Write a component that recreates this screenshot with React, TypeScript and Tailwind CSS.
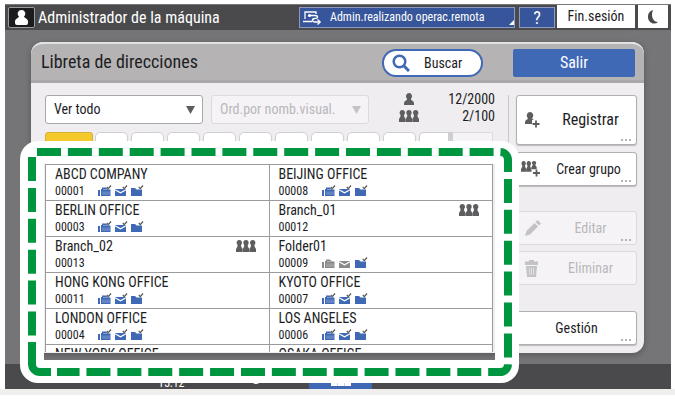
import { clsx } from "clsx";
import type { ReactNode } from "react";

type Entry = {
  name: string;
  id: string;
  group?: boolean;
  folderOnly?: boolean;
};

const ROWS: [Entry, Entry][] = [
  [
    { name: "ABCD COMPANY", id: "00001" },
    { name: "BEIJING OFFICE", id: "00008" },
  ],
  [
    { name: "BERLIN OFFICE", id: "00003" },
    { name: "Branch_01", id: "00012", group: true },
  ],
  [
    { name: "Branch_02", id: "00013", group: true },
    { name: "Folder01", id: "00009", folderOnly: true },
  ],
  [
    { name: "HONG KONG OFFICE", id: "00011" },
    { name: "KYOTO OFFICE", id: "00007" },
  ],
  [
    { name: "LONDON OFFICE", id: "00004" },
    { name: "LOS ANGELES", id: "00006" },
  ],
  [
    { name: "NEW YORK OFFICE", id: "00002" },
    { name: "OSAKA OFFICE", id: "00005" },
  ],
];

const TABS = ["AB", "CD", "EF", "GH", "IJK", "LMN", "OPQ", "RST", "UVW"];

const PAWN = "M3.300 0C5 0 6 1.200 6 2.700q0 1.500-1 2.300 0 1.500.7 2.500L6.600 9v3H0V9l.9-1.500q.7-1 .7-2.500Q.6 4.200.6 2.700C.6 1.200 1.600 0 3.300 0Z";

function PersonIcon({ className }: { className?: string }) {
  return (
    <svg viewBox="0 0 10 12" className={clsx("h-3 w-[10px]", className)} fill="currentColor" aria-hidden="true">
      <path d="M5 0a3.200 3.200 0 0 1 2.300 5.300q-.4.700-.3 1.500Q10 8 10 10v2H0v-2q0-2 3-3.200.1-.8-.3-1.500A3.200 3.200 0 0 1 5 0Z" />
    </svg>
  );
}

function GroupIcon({ className }: { className?: string }) {
  return (
    <svg viewBox="0 0 20 12" className={clsx("h-3 w-5", className)} fill="currentColor" aria-hidden="true">
      <path d={PAWN} />
      <path transform="translate(6.700 0)" d={PAWN} />
      <path transform="translate(13.400 0)" d={PAWN} />
    </svg>
  );
}

function Plus() {
  return <path d="M0 3.500h7M3.500 0v7" stroke="currentColor" strokeWidth="1.800" fill="none" />;
}

function AddPersonIcon() {
  return (
    <svg viewBox="0 0 15 16" className="h-4 w-[15px]" fill="currentColor" aria-hidden="true">
      <path d="M5 0a3.500 3.500 0 0 1 2.600 5.600q-.5.700-.3 1.400L9 8H7v4H0v-2q.2-2.200 2.700-3 .2-.7-.3-1.400A3.500 3.500 0 0 1 5 0Z" />
      <g transform="translate(7.500 8.500)">
        <Plus />
      </g>
    </svg>
  );
}

function AddGroupIcon() {
  return (
    <svg viewBox="0 0 20 16" className="h-4 w-5" fill="currentColor" aria-hidden="true">
      <path transform="scale(0.800 0.900)" d={PAWN} />
      <path transform="translate(5.200 0) scale(0.800 0.900)" d={PAWN} />
      <path transform="translate(10.400 0) scale(0.800 0.680)" d={PAWN} />
      <g transform="translate(12 8.500)">
        <Plus />
      </g>
    </svg>
  );
}

function Tick() {
  return <path d="M8.800 2l1.500 1.600L13 .500" stroke="#555" strokeWidth="1.200" fill="none" />;
}

function FaxIcon({ on }: { on: boolean }) {
  return (
    <svg viewBox="0 0 14 12" className="h-3 w-[14px]" aria-hidden="true">
      <path d="M0 5h2v6H0zM3 4h1V2.500h4L10 4.500h2.500V11H3z" fill={on ? "#4069b5" : "#8a8a8a"} />
      <path d="M5 4.500h4M5 6.500v3.500M7 6.500v3.500M9 6.500v3.500M11 6.500v3.500" stroke="#fff" strokeWidth=".7" opacity=".5" />
      {on && <Tick />}
    </svg>
  );
}

function MailIcon({ on }: { on: boolean }) {
  return (
    <svg viewBox="0 0 14 12" className="h-3 w-[14px]" aria-hidden="true">
      <path d="M1 4h11v7H1z" fill={on ? "#4069b5" : "#8a8a8a"} />
      <path d="M1 4.800l5.500 3L12 4.800" stroke="#fff" strokeWidth="1.200" fill="none" />
      {on && <Tick />}
    </svg>
  );
}

function FolderIcon() {
  return (
    <svg viewBox="0 0 14 12" className="h-3 w-[14px]" aria-hidden="true">
      <path d="M1 3h4l1.500 1.500H12V11H1z" fill="#4069b5" />
      <Tick />
    </svg>
  );
}

function EntryCell({ entry }: { entry: Entry }) {
  return (
    <td className="border border-[#9b9b9d] p-0">
      <div className="relative h-[35px] pl-[9px]">
        <div className="text-[14px] leading-[18px]">{entry.name}</div>
        <div className="flex items-center text-[12px] leading-[16px]">
          <span className="w-[43px]">{entry.id}</span>
          {!entry.group && (
            <span className="flex gap-[2px]">
              <FaxIcon on={!entry.folderOnly} />
              <MailIcon on={!entry.folderOnly} />
              <FolderIcon />
            </span>
          )}
        </div>
        {entry.group && <GroupIcon className="absolute top-[3px] right-[13px] text-[#5e5e60]" />}
      </div>
    </td>
  );
}

type SideButtonProps = {
  children: ReactNode;
  icon?: ReactNode;
  disabled?: boolean;
  dots?: boolean;
  className?: string;
};

function SideButton({ children, icon, disabled, dots = true, className }: SideButtonProps) {
  return (
    <button
      type="button"
      disabled={disabled}
      className={clsx(
        "relative flex w-full items-center rounded-[3px] border",
        disabled
          ? "border-[#dcdadd] bg-[#f5f3f6] text-[#b9b8ba]"
          : "border-[#b0afb1] bg-white text-[#1d1d1f] shadow-[0_1px_1px_#bbb]",
        className,
      )}
    >
      {icon && <span className="flex w-5 shrink-0 text-[#5e5e60] in-disabled:text-[#c3c2c4]">{icon}</span>}
      <span className="flex-1 text-center">{children}</span>
      {dots && (
        <span className="absolute right-[5px] bottom-[3px] flex gap-[2px]">
          <i className="size-[2px] bg-[#b4b3b5]" />
          <i className="size-[2px] bg-[#b4b3b5]" />
          <i className="size-[2px] bg-[#b4b3b5]" />
        </span>
      )}
    </button>
  );
}

function DropDown({ label, disabled }: { label: string; disabled?: boolean }) {
  return (
    <div className="relative h-[29px] w-[158px] self-end">
      <select
        aria-label={label}
        disabled={disabled}
        className={clsx(
          "h-full w-full appearance-none rounded-[3px] border px-2 text-[14px] opacity-100",
          disabled ? "border-[#dcdadd] bg-[#f5f3f6] text-[#b9b8ba]" : "border-[#a9a8aa] bg-white text-[#1d1d1f]",
        )}
      >
        <option>{label}</option>
      </select>
      <svg
        viewBox="0 0 9 8"
        className={clsx(
          "pointer-events-none absolute top-[11px] right-2 h-2 w-[9px]",
          disabled ? "text-[#c3c2c4]" : "text-[#5e5e60]",
        )}
        aria-hidden="true"
      >
        <path d="M0 0h9L4.500 8z" fill="currentColor" />
      </svg>
    </div>
  );
}

function TopBar() {
  return (
    <header className="flex h-[26px] items-start border-t border-[#77767a] bg-[#4a4a4c] pr-[3px] pl-[3px] text-white">
      <span className="mt-[2px] flex h-[21px] w-[27px] items-center justify-center rounded-[2px] border border-[#9a9a9c] bg-[#1c1c1e]">
        <svg viewBox="0 0 13 15" className="h-[15px] w-[13px]" fill="#fff" aria-hidden="true">
          <path d="M6.500 0a3.700 3.700 0 0 1 2.500 6.500c.2 1.800 4 2 4 5V13q0 2-2 2H2q-2 0-2-2v-1.500c0-3 3.800-3.200 4-5A3.700 3.700 0 0 1 6.500 0Z" />
        </svg>
      </span>
      <span className="ml-[3px] text-[16px] leading-[25px] whitespace-nowrap">Administrador de la máquina</span>
      <button
        type="button"
        className="relative mt-[2px] ml-auto flex h-[21px] w-[216px] items-center border border-[#8d9bc4] bg-[#37559a] pl-[2px] text-[12px] leading-[19px]"
      >
        <svg viewBox="0 0 20 16" className="h-4 w-5" fill="none" stroke="#fff" strokeWidth="1.300" aria-hidden="true">
          <path d="M3 9V2h11v2M1 11.500h9M8 5.500h5q2.500 0 2.500 1.500T13 8.500t-2.500 1.700T13 12h5M15.500 9.500L18.200 12l-2.700 2.500" />
          <circle cx="7.500" cy="5.500" r="1.600" fill="#fff" stroke="none" />
        </svg>
        <span className="ml-2 whitespace-nowrap">Admin.realizando operac.remota</span>
        <svg viewBox="0 0 5 5" className="absolute right-0 bottom-[2px] size-[5px]" aria-hidden="true">
          <path d="M5 0v5H0z" fill="#fff" />
        </svg>
      </button>
      <button
        type="button"
        className="mt-[2px] ml-1 h-[21px] w-[36px] border border-[#8d9bc4] bg-[#37559a] text-[18px] leading-[19px]"
      >
        ?
      </button>
      <button type="button" className="ml-[2px] h-[23px] w-[78px] bg-white text-[14px] leading-[23px] text-[#1d1d1f]">
        Fin.sesión
      </button>
      <button type="button" aria-label="Reposo" className="ml-[3px] flex h-[23px] w-[30px] items-center justify-center bg-white">
        <svg viewBox="0 0 10 14" className="h-[14px] w-[10px]" fill="#4a4a4c" aria-hidden="true">
          <path d="M5 0C1 1.500 0 4 0 7c0 4 3 6.500 6 6.500q2.500 0 4-1.500C5 12 2.500 6 5 0Z" />
        </svg>
      </button>
    </header>
  );
}

function HighlightFrame() {
  return (
    <div className="pointer-events-none absolute -top-[23px] -right-[26px] -bottom-[31px] -left-[25px] z-10 rounded-[18px] border-[24px] border-t-[23px] border-b-[23px] border-white">
      <svg
        viewBox="20 141 499 242"
        preserveAspectRatio="none"
        className="absolute -top-[23px] -left-6 h-[calc(100%+46px)] w-[calc(100%+48px)] max-w-none"
        fill="none"
        stroke="#009640"
        strokeWidth="8"
        aria-hidden="true"
      >
        <path d="M37 152H500a8 8 0 0 1 8 8V364a8 8 0 0 1-8 8H57" strokeDasharray="24 6.900" />
        <path d="M32 157V336" strokeDasharray="24 6.900" />
        <path d="M32 342V364a8 8 0 0 0 8 8H51" />
      </svg>
    </div>
  );
}

export default function App() {
  return (
    <div className="min-h-screen bg-white pt-1 pr-1 pl-[5px] font-['Roboto_Condensed','Open_Sans_Condensed',sans-serif] text-[#1d1d1f]">
      <div className="bg-[#757477]">
        <TopBar />
        <main className="pt-3 pr-[27px] pb-[11px] pl-[26px]">
          <div className="rounded-[12px] bg-[#efedf0] shadow-[0_2px_5px_1px_#5e5d60]">
            <div className="flex h-[41px] items-start rounded-t-[12px] border-t-2 border-b-[3px] border-t-[#e2e1e3] border-b-[#a9a8aa] bg-[#b5b3b4] pt-[5px] pr-[9px] pl-[10px]">
              <h1 className="text-[18px] leading-[26px]">Libreta de direcciones</h1>
              <button
                type="button"
                className="ml-auto flex h-[28px] w-[101px] items-center rounded-full border-2 border-[#4069b5] bg-white pl-2 text-[14px]"
              >
                <svg viewBox="0 0 18 18" className="size-[18px]" fill="none" stroke="#4069b5" strokeWidth="2.500" aria-hidden="true">
                  <circle cx="7.500" cy="7.500" r="5.800" />
                  <path d="M11.500 11.500l5.500 5.500" strokeWidth="3" />
                </svg>
                <span className="ml-[14px]">Buscar</span>
              </button>
              <button
                type="button"
                className="ml-[30px] h-[28px] w-[122px] rounded-[2px] bg-[#4069b5] text-[16px] leading-[28px] text-white"
              >
                Salir
              </button>
            </div>

            <div className="flex pr-[7px] pl-[14px]">
              <section className="flex min-w-0 flex-1 flex-col pt-2 pb-px">
                <div className="flex h-[33px] gap-2">
                  <DropDown label="Ver todo" />
                  <DropDown label="Ord.por nomb.visual." disabled />
                  <div className="-mr-[2px] ml-auto grid grid-cols-[20px_76px] items-center text-right text-[14px] leading-[16px]">
                    <PersonIcon className="justify-self-center text-[#5e5e60]" />
                    <span>12/2000</span>
                    <GroupIcon className="text-[#5e5e60]" />
                    <span>2/100</span>
                  </div>
                </div>

                <div className="mt-2 flex h-8">
                  <button type="button" aria-label="Frec." className="w-12 rounded-t-[3px] border border-[#d5b037] bg-[#f4c92a]" />
                  <div className="ml-[2px] flex flex-1 gap-[3px]">
                    {TABS.map((tab) => (
                      <button
                        key={tab}
                        type="button"
                        aria-label={tab}
                        className="flex-1 rounded-t-[5px] border border-[#cfced0] bg-white"
                      />
                    ))}
                    <button
                      type="button"
                      aria-label="XYZ"
                      className="w-[34px] rounded-tl-[5px] border border-r-[5px] border-[#cfced0] bg-white"
                    />
                  </div>
                  <div className="w-10 border border-l-0 border-[#dcdadd] bg-[#f5f3f6]" />
                </div>

                <div className="relative flex h-0 min-h-0 grow flex-col">
                  <div className="min-h-0 flex-1 overflow-hidden">
                    <table className="w-full table-fixed border-collapse bg-white">
                      <tbody>
                        {ROWS.map(([left, right]) => (
                          <tr key={left.id}>
                            <EntryCell entry={left} />
                            <EntryCell entry={right} />
                          </tr>
                        ))}
                      </tbody>
                    </table>
                  </div>
                  <HighlightFrame />
                </div>
              </section>

              <aside className="mt-3 ml-[15px] w-[129px] border-l border-[#c9c8ca] pb-2 pl-[7px]">
                <SideButton className="h-[50px] pl-2 text-[16px]" icon={<AddPersonIcon />}>
                  Registrar
                </SideButton>
                <SideButton className="mt-[7px] h-[34px] pl-1 text-[14px]" icon={<AddGroupIcon />}>
                  Crear grupo
                </SideButton>
                <SideButton
                  className="mt-[25px] h-[34px] pl-2 text-[14px]"
                  disabled
                  icon={
                    <svg viewBox="0 0 16 16" className="size-4" fill="currentColor" aria-hidden="true">
                      <path d="M0 16l1.500-5L9.500 3 13 6.500l-8 8zM10.500 2L12.500 0 16 3.500l-2 2z" />
                    </svg>
                  }
                >
                  Editar
                </SideButton>
                <SideButton
                  className="mt-[6px] h-[34px] pl-2 text-[14px]"
                  disabled
                  dots={false}
                  icon={
                    <svg viewBox="0 0 13 17" className="h-[17px] w-[13px]" fill="currentColor" aria-hidden="true">
                      <path d="M4 0h5v1.500h4V5H0V1.500h4zM1 6h11l-1 11H2z" />
                      <path d="M4.500 8v7M6.500 8v7M8.500 8v7" stroke="#f5f3f6" strokeWidth=".6" />
                    </svg>
                  }
                >
                  Eliminar
                </SideButton>
                <SideButton className="mt-[26px] h-[34px] text-[14px]">Gestión</SideButton>
              </aside>
            </div>
          </div>
        </main>
        <footer className="flex h-[25px] items-end overflow-hidden bg-[#4a4a4c] text-white">
          <span className="ml-[153px] w-6 text-[12px] leading-[11px]">15:12</span>
          <span className="mb-[5px] ml-[70px] h-3 w-2 rounded-full bg-white" />
          <button type="button" aria-label="Libreta de direcciones" className="ml-[49px] flex h-[18px] w-[63px] items-end justify-center bg-[#4069b5] pb-[3px]">
            <GroupIcon />
          </button>
        </footer>
      </div>
      <div className="-mr-1 -ml-[5px] h-[6px] bg-[#f0efed]" />
    </div>
  );
}
